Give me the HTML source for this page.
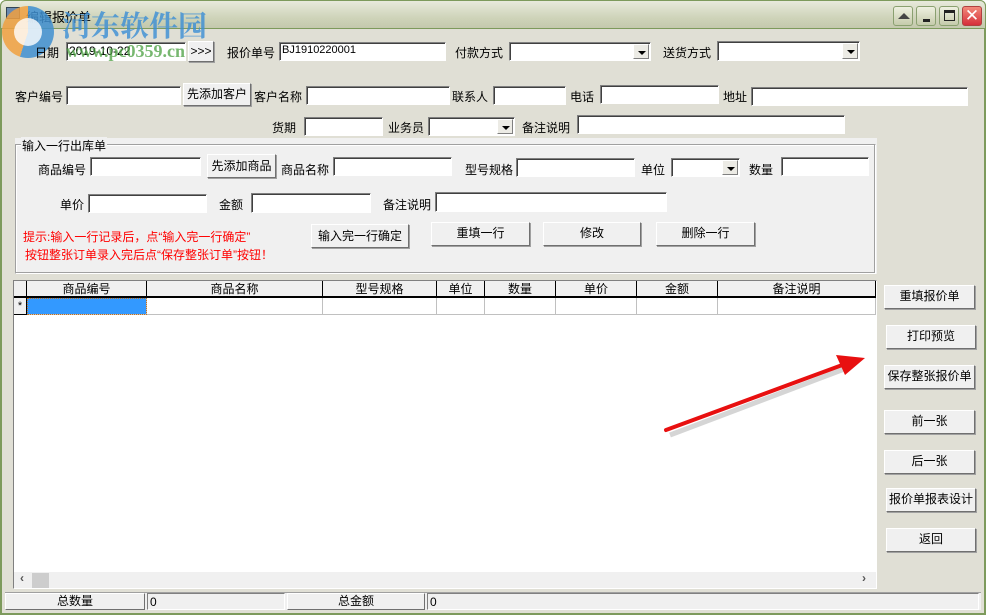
<!DOCTYPE html>
<html><head><meta charset="utf-8"><style>
*{box-sizing:border-box;margin:0;padding:0}
body{width:986px;height:615px;overflow:hidden;background:#fff;font-family:"Liberation Sans","Noto Sans CJK SC","WenQuanYi Zen Hei",sans-serif;font-size:12px;color:#000;position:relative}
.a{position:absolute;white-space:nowrap}
#win{position:absolute;left:0;top:0;width:986px;height:615px;background:#e0dfd5;border:2px solid #7d9a5c;border-top:none;border-radius:6px 6px 0 0}
#tb{position:absolute;left:0;top:0;width:986px;height:29px;background:linear-gradient(#e8eadc,#cfd4ba 60%,#c4c9ad);border:1px solid #7d9a5c;border-radius:6px 6px 0 0}
.in{position:absolute;background:#fff;border:1px solid;border-color:#808080 #fff #fff #808080;box-shadow:inset 1px 1px 0 #404040}
.sel .dd{position:absolute;right:1px;top:1px;bottom:1px;width:16px;background:#ecebe5;border:1px solid;border-color:#fff #808080 #808080 #fff}
.sel .dd:after{content:"";position:absolute;left:4px;top:6px;border:4px solid transparent;border-top:4px solid #000;border-bottom:0}
.bt{position:absolute;background:#f0f0f0;border:1px solid;border-color:#fff #707070 #707070 #fff;box-shadow:1px 1px 0 #a0a0a0;text-align:center;line-height:21px}
.red{color:#f00}
.tbtn{position:absolute;top:6px;width:20px;height:20px;border:1px solid #8aa070;border-radius:3px;background:linear-gradient(#eef0e0,#c5cbab)}
.hd{position:absolute;top:281px;height:17px;background:#f0f0f0;border-right:1px solid #000;border-bottom:2px solid #000;text-align:center;line-height:16px}
.cl{position:absolute;top:298px;height:17px;border-right:1px solid #c0c0c0;border-bottom:1px solid #c0c0c0;background:#fff}
</style></head><body>
<div id="win"></div>
<div id="tb"></div>
<div class="a" style="left:6px;top:7px;width:14px;height:12px;background:#6a8ab0;border:1px solid #345"></div>
<div class="a" style="left:26px;top:7px;font-size:13px">编辑报价单</div>
<div class="tbtn" style="left:893px"><div class="a" style="left:4px;top:6px;border:6px solid transparent;border-bottom:6px solid #444;border-top:0"></div></div>
<div class="tbtn" style="left:916px"><div class="a" style="left:6px;top:12px;width:7px;height:3px;background:#222"></div></div>
<div class="tbtn" style="left:939px"><div class="a" style="left:4px;top:3px;width:11px;height:11px;border:1px solid #222;border-top:3px solid #222"></div></div>
<div class="tbtn" style="left:962px;background:linear-gradient(#f28a7a,#d6303a);border-color:#b04040;color:#fff;font-size:17px;line-height:17px;text-align:center">✕</div>

<!-- watermark -->
<div class="a" style="left:2px;top:6px;width:52px;height:52px;border-radius:50%;background:conic-gradient(#3f8fd0 0 55%,#f0a040 55% 100%);opacity:.85"></div>
<div class="a" style="left:14px;top:18px;width:28px;height:28px;border-radius:50%;background:#fff;opacity:.8"></div>
<div class="a" style="left:62px;top:4px;font-size:29px;font-weight:bold;color:#3a8ed6;opacity:.8;font-family:'Noto Serif CJK SC',serif">河东软件园</div>
<div class="a" style="left:66px;top:41px;font-size:18px;font-weight:bold;color:#4aa040;opacity:.75;font-family:'Liberation Serif',serif;z-index:5">www.pc0359.cn</div>

<!-- row1 -->
<div class="a" style="left:35px;top:44px">日期</div>
<div class="in" style="left:66px;top:42px;width:120px;height:19px"><span class="a" style="left:2px;top:1px">2019-10-22</span></div>
<div class="bt" style="left:188px;top:41px;width:26px;height:21px;line-height:18px">&gt;&gt;&gt;</div>
<div class="a" style="left:227px;top:44px">报价单号</div>
<div class="in" style="left:279px;top:42px;width:167px;height:19px"><span class="a" style="left:2px;top:1px;font-size:11px">BJ1910220001</span></div>
<div class="a" style="left:455px;top:44px">付款方式</div>
<div class="in sel" style="left:509px;top:42px;width:142px;height:19px"><div class="dd"></div></div>
<div class="a" style="left:663px;top:44px">送货方式</div>
<div class="in sel" style="left:717px;top:41px;width:143px;height:20px"><div class="dd"></div></div>

<!-- row2 -->
<div class="a" style="left:15px;top:88px">客户编号</div>
<div class="in" style="left:66px;top:86px;width:115px;height:19px"></div>
<div class="bt" style="left:183px;top:83px;width:68px;height:23px">先添加客户</div>
<div class="a" style="left:254px;top:88px">客户名称</div>
<div class="in" style="left:306px;top:86px;width:144px;height:19px"></div>
<div class="a" style="left:452px;top:88px">联系人</div>
<div class="in" style="left:493px;top:86px;width:73px;height:19px"></div>
<div class="a" style="left:570px;top:88px">电话</div>
<div class="in" style="left:600px;top:85px;width:119px;height:19px"></div>
<div class="a" style="left:723px;top:88px">地址</div>
<div class="in" style="left:751px;top:87px;width:217px;height:19px"></div>

<!-- row3 -->
<div class="a" style="left:272px;top:119px">货期</div>
<div class="in" style="left:304px;top:117px;width:79px;height:19px"></div>
<div class="a" style="left:388px;top:119px">业务员</div>
<div class="in sel" style="left:428px;top:117px;width:87px;height:19px"><div class="dd"></div></div>
<div class="a" style="left:522px;top:119px">备注说明</div>
<div class="in" style="left:577px;top:115px;width:268px;height:19px"></div>

<!-- group -->
<div class="a" style="left:15px;top:138px;width:862px;height:136px;background:#f0f0f0"></div>
<div class="a" style="left:15px;top:144px;width:861px;height:130px;border:1px solid;border-color:#a0a0a0 #fff #fff #a0a0a0;box-shadow:inset -1px -1px 0 #a0a0a0,inset 1px 1px 0 #fff"></div>
<div class="a" style="left:21px;top:137px;background:#f0f0f0;padding:0 1px">输入一行出库单</div>
<div class="a" style="left:38px;top:161px">商品编号</div>
<div class="in" style="left:90px;top:157px;width:111px;height:19px"></div>
<div class="bt" style="left:207px;top:154px;width:69px;height:24px;line-height:22px">先添加商品</div>
<div class="a" style="left:281px;top:161px">商品名称</div>
<div class="in" style="left:333px;top:157px;width:119px;height:19px"></div>
<div class="a" style="left:465px;top:161px">型号规格</div>
<div class="in" style="left:516px;top:158px;width:119px;height:19px"></div>
<div class="a" style="left:641px;top:161px">单位</div>
<div class="in sel" style="left:671px;top:158px;width:69px;height:19px"><div class="dd"></div></div>
<div class="a" style="left:749px;top:161px">数量</div>
<div class="in" style="left:781px;top:157px;width:88px;height:19px"></div>
<div class="a" style="left:60px;top:196px">单价</div>
<div class="in" style="left:88px;top:194px;width:119px;height:19px"></div>
<div class="a" style="left:219px;top:196px">金额</div>
<div class="in" style="left:251px;top:193px;width:120px;height:20px"></div>
<div class="a" style="left:383px;top:196px">备注说明</div>
<div class="in" style="left:435px;top:192px;width:232px;height:20px"></div>
<div class="a red" style="left:23px;top:228px">提示:输入一行记录后，点“输入完一行确定”</div>
<div class="a red" style="left:25px;top:246px">按钮整张订单录入完后点“保存整张订单”按钮！</div>
<div class="bt" style="left:311px;top:224px;width:98px;height:24px;line-height:22px">输入完一行确定</div>
<div class="bt" style="left:431px;top:222px;width:99px;height:24px">重填一行</div>
<div class="bt" style="left:543px;top:222px;width:98px;height:24px">修改</div>
<div class="bt" style="left:656px;top:222px;width:99px;height:24px">删除一行</div>

<!-- grid -->
<div class="a" style="left:13px;top:280px;width:864px;height:309px;background:#fff;border:1px solid;border-color:#808080 #fff #fff #808080"></div>
<div class="hd" style="left:14px;width:13px"></div>
<div class="hd" style="left:27px;width:120px">商品编号</div>
<div class="hd" style="left:147px;width:176px">商品名称</div>
<div class="hd" style="left:323px;width:114px">型号规格</div>
<div class="hd" style="left:437px;width:48px">单位</div>
<div class="hd" style="left:485px;width:71px">数量</div>
<div class="hd" style="left:556px;width:81px">单价</div>
<div class="hd" style="left:637px;width:81px">金额</div>
<div class="hd" style="left:718px;width:158px">备注说明</div>
<div class="a" style="left:14px;top:298px;width:13px;height:17px;background:#f0f0f0;border-right:1px solid #000;border-bottom:1px solid #000;text-align:center;line-height:17px;font-size:11px">*</div>
<div class="cl" style="left:27px;width:120px;background:#3399ff;outline:1px dotted #c07020;outline-offset:-1px"></div>
<div class="cl" style="left:147px;width:176px"></div>
<div class="cl" style="left:323px;width:114px"></div>
<div class="cl" style="left:437px;width:48px"></div>
<div class="cl" style="left:485px;width:71px"></div>
<div class="cl" style="left:556px;width:81px"></div>
<div class="cl" style="left:637px;width:81px"></div>
<div class="cl" style="left:718px;width:158px"></div>
<div class="a" style="left:14px;top:572px;width:862px;height:16px;background:#f0f0f0"></div>
<div class="a" style="left:32px;top:573px;width:17px;height:15px;background:#cdcdcd"></div>
<div class="a" style="left:20px;top:571px;color:#555;font-weight:bold">‹</div>
<div class="a" style="left:862px;top:571px;color:#555;font-weight:bold">›</div>

<!-- right buttons -->
<div class="bt" style="left:884px;top:285px;width:91px;height:24px">重填报价单</div>
<div class="bt" style="left:886px;top:325px;width:90px;height:24px">打印预览</div>
<div class="bt" style="left:884px;top:365px;width:91px;height:24px">保存整张报价单</div>
<div class="bt" style="left:884px;top:410px;width:91px;height:24px">前一张</div>
<div class="bt" style="left:884px;top:450px;width:91px;height:24px">后一张</div>
<div class="bt" style="left:886px;top:488px;width:90px;height:24px">报价单报表设计</div>
<div class="bt" style="left:886px;top:528px;width:90px;height:24px">返回</div>

<!-- arrow -->
<svg class="a" style="left:0;top:0" width="986" height="615">
<line x1="668" y1="432" x2="845" y2="365" stroke="#888" stroke-width="5" opacity=".35" transform="translate(2,3)"/>
<line x1="666" y1="430" x2="845" y2="364" stroke="#e81010" stroke-width="4" stroke-linecap="round"/>
<polygon points="865,358 836,355 845,375" fill="#e81010"/>
</svg>

<!-- status -->
<div class="a" style="left:5px;top:592px;width:976px;height:18px;background:#f0f0f0;border-top:1px solid #a0a0a0"></div>
<div class="bt" style="left:5px;top:593px;width:140px;height:17px;line-height:15px;box-shadow:none">总数量</div>
<div class="in" style="left:147px;top:593px;width:138px;height:17px;background:#f0f0f0;box-shadow:none"><span class="a" style="left:2px;top:1px">0</span></div>
<div class="bt" style="left:287px;top:593px;width:138px;height:17px;line-height:15px;box-shadow:none">总金额</div>
<div class="in" style="left:427px;top:593px;width:552px;height:17px;background:#f0f0f0;box-shadow:none"><span class="a" style="left:2px;top:1px">0</span></div>
</body></html>
